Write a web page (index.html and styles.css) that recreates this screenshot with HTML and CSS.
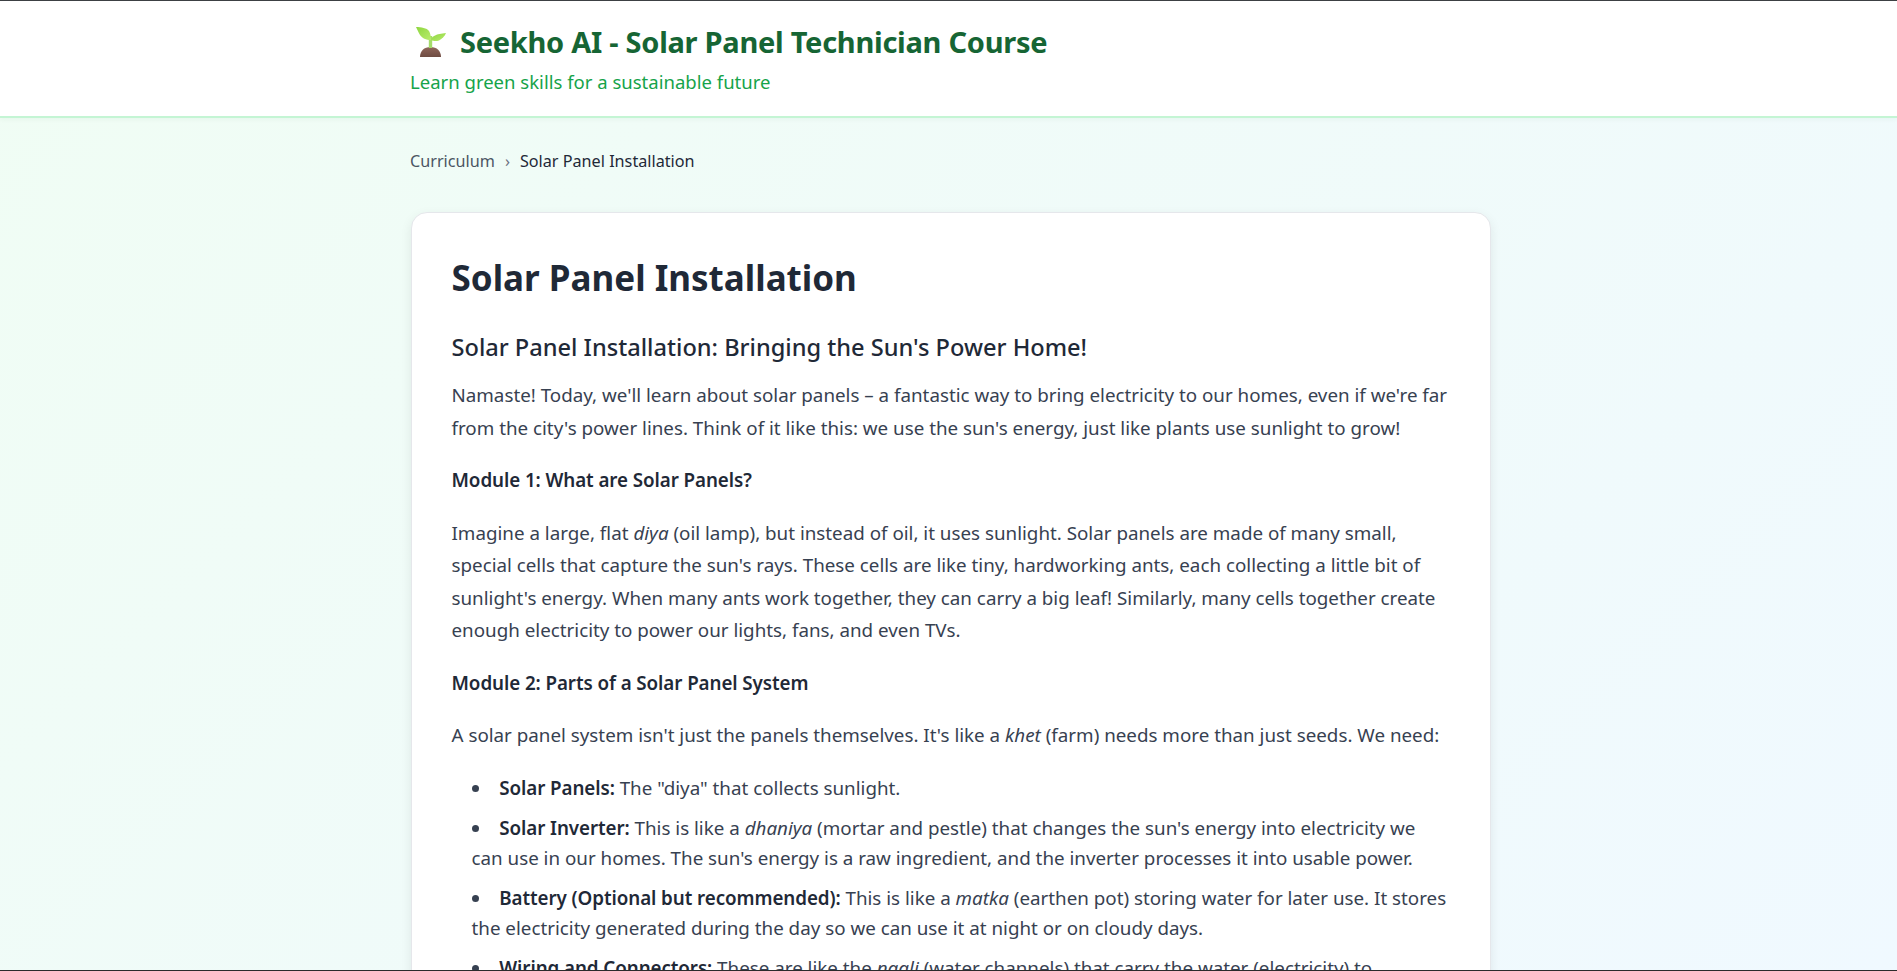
FILE: index.html
```html
<!DOCTYPE html>
<html lang="en">
<head>
    <meta charset="UTF-8">
    <meta name="viewport" content="width=device-width, initial-scale=1.0">
    <title>Seekho AI - Solar Panel Technician Course</title>
    <link rel="stylesheet" href="styles.css">
</head>
<body>

    <header class="site-header">
        <div class="wrap">
            <h1 class="site-title">
                <svg class="sprout" viewBox="0 0 30 30" aria-hidden="true">
                    <defs>
                        <linearGradient id="soil" x1="0" y1="0" x2="0" y2="1">
                            <stop offset="0" stop-color="#8f665a"/>
                            <stop offset="1" stop-color="#6f4c42"/>
                        </linearGradient>
                        <linearGradient id="leaf" x1="0" y1="0" x2="1" y2="1">
                            <stop offset="0" stop-color="#8ed63f"/>
                            <stop offset="1" stop-color="#b9ec6e"/>
                        </linearGradient>
                    </defs>
                    <path d="M4 30 C4 24 8 20 14.500 20 C21 20 25 24 25 30 Z" fill="url(#soil)"/>
                    <path d="M12.800 9 L12.800 21 L16.200 21 L16.200 9 Z" fill="#a5dc6a"/>
                    <path d="M0 0 C5 0 11 1 13 4 C14.500 6.500 15 10 15 13 C10 13 6 11 4 8 C2.500 5.500 1 2 0 0 Z" fill="url(#leaf)"/>
                    <path d="M15 13 C16 9 20 7 30 6 C29 9 26 12 23 13.500 C20 14.500 17 14 15 13 Z" fill="url(#leaf)"/>
                </svg>
                Seekho AI - Solar Panel Technician Course
            </h1>
            <p class="site-tagline">Learn green skills for a sustainable future</p>
        </div>
    </header>

    <main class="wrap">
        <nav class="crumbs">
            <a href="#" class="crumb-link">Curriculum</a>
            <span class="crumb-sep">›</span>
            <span class="crumb-current">Solar Panel Installation</span>
        </nav>

        <article class="lesson">
            <h1 class="lesson-title">Solar Panel Installation</h1>
            <h2 class="lesson-sub">Solar Panel Installation: Bringing the Sun's Power Home!</h2>
            <p>Namaste! Today, we'll learn about solar panels – a fantastic way to bring electricity to our homes, even if we're far from the city's power lines. Think of it like this: we use the sun's energy, just like plants use sunlight to grow!</p>
            <p><strong>Module 1: What are Solar Panels?</strong></p>
            <p>Imagine a large, flat <em>diya</em> (oil lamp), but instead of oil, it uses sunlight. Solar panels are made of many small, special cells that capture the sun's rays. These cells are like tiny, hardworking ants, each collecting a little bit of sunlight's energy. When many ants work together, they can carry a big leaf! Similarly, many cells together create enough electricity to power our lights, fans, and even TVs.</p>
            <p><strong>Module 2: Parts of a Solar Panel System</strong></p>
            <p>A solar panel system isn't just the panels themselves. It's like a <em>khet</em> (farm) needs more than just seeds. We need:</p>
            <ul>
                <li><strong>Solar Panels:</strong> The "diya" that collects sunlight.</li>
                <li><strong>Solar Inverter:</strong> This is like a <em>dhaniya</em> (mortar and pestle) that changes the sun's energy into electricity we can use in our homes. The sun's energy is a raw ingredient, and the inverter processes it into usable power.</li>
                <li><strong>Battery (Optional but recommended):</strong> This is like a <em>matka</em> (earthen pot) storing water for later use. It stores the electricity generated during the day so we can use it at night or on cloudy days.</li>
                <li><strong>Wiring and Connectors:</strong> These are like the <em>nagli</em> (water channels) that carry the water (electricity) to different parts of the home.</li>
            </ul>
        </article>
    </main>

    <div class="frame-line"></div>

</body>
</html>
```

FILE: styles.css
```css
* {
    margin: 0;
    padding: 0;
    box-sizing: border-box;
}

html {
    height: 971px;
    overflow: hidden;
}

body {
    height: 971px;
    overflow: hidden;
    font-family: "Noto Sans", "Open Sans", Arial, sans-serif;
    font-size: 18.8px;
    line-height: 32.64px;
    color: #374151;
    background: linear-gradient(135deg, #f0fdf4 0%, #f0f9ff 100%);
    border-top: 1px solid #3c4043;
}

.wrap {
    width: 1080px;
    margin-left: 410px;
}

.site-header {
    height: 117px;
    background-color: white;
    border-bottom: 2px solid #c4f5d4;
    box-shadow: 0 2px 4px rgba(22, 101, 52, 0.04);
    padding-top: 19px;
}

.site-title {
    display: flex;
    align-items: center;
    gap: 14px;
    font-size: 29px;
    line-height: 44px;
    font-weight: 700;
    color: #166534;
    letter-spacing: -0.27px;
}

.sprout {
    width: 30px;
    height: 30px;
    margin-left: 6px;
}

.site-tagline {
    font-size: 18.55px;
    line-height: 28px;
    margin-top: 4px;
    color: #16a34a;
}

.crumbs {
    display: flex;
    gap: 10px;
    margin-top: 29px;
    font-size: 16.2px;
    line-height: 28px;
}

.crumb-link {
    color: #4b5563;
    text-decoration: none;
}

.crumb-sep {
    color: #6b7280;
}

.crumb-current {
    color: #1f2937;
}

.lesson {
    margin-top: 37px;
    margin-left: 1px;
    width: 1080px;
    height: 900px;
    background-color: white;
    border: 1px solid #e5e7eb;
    border-radius: 16px;
    box-shadow: 0 4px 12px rgba(0, 0, 0, 0.08);
    padding: 37px 41px 37px 39.5px;
}

.lesson-title {
    font-size: 35px;
    line-height: 56px;
    font-weight: 700;
    color: #1f2937;
    margin-bottom: 23px;
}

.lesson-sub {
    font-size: 23.6px;
    line-height: 36px;
    font-weight: 500;
    color: #1f2937;
    margin-bottom: 14px;
}

.lesson p {
    margin-bottom: 19.8px;
}

.lesson strong {
    font-weight: 600;
    color: #1f2937;
    letter-spacing: -0.08px;
}

.lesson ul {
    padding-left: 20px;
    padding-top: 1px;
    list-style-position: inside;
}

.lesson li {
    line-height: 30px;
    margin-bottom: 10.2px;
}

.lesson li strong:first-child {
    margin-left: 1px;
}

.frame-line {
    position: fixed;
    left: 0;
    right: 0;
    bottom: 0;
    height: 1px;
    background-color: #2b2b2b;
}
```
